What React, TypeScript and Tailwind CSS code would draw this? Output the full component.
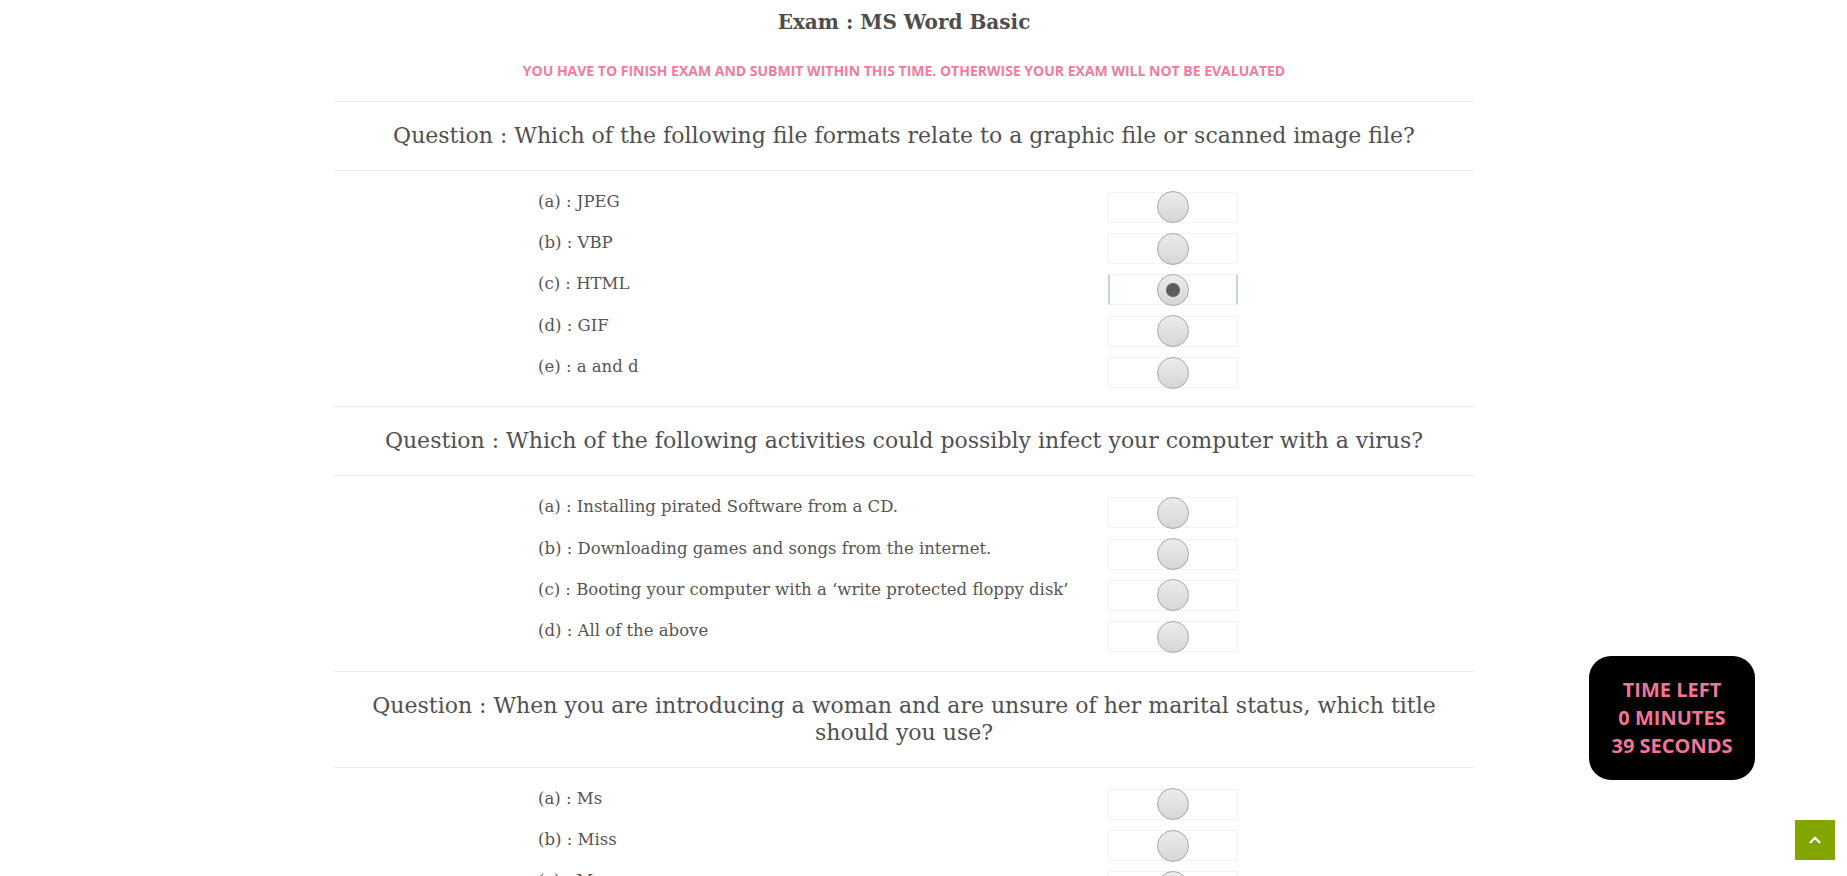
import { ChevronUp } from "lucide-react";

type Question = {
  text: string;
  options: string[];
  selected?: number;
};

const questions: Question[] = [
  {
    text: "Question : Which of the following file formats relate to a graphic file or scanned image file?",
    options: ["(a) : JPEG", "(b) : VBP", "(c) : HTML", "(d) : GIF", "(e) : a and d"],
    selected: 2,
  },
  {
    text: "Question : Which of the following activities could possibly infect your computer with a virus?",
    options: [
      "(a) : Installing pirated Software from a CD.",
      "(b) : Downloading games and songs from the internet.",
      "(c) : Booting your computer with a \u2018write protected floppy disk\u2019",
      "(d) : All of the above",
    ],
  },
  {
    text: "Question : When you are introducing a woman and are unsure of her marital status, which title should you use?",
    options: ["(a) : Ms", "(b) : Miss", "(c) : Mrs", "(d) : Madam"],
  },
];

const slab = "font-['DejaVu_Serif',serif]";

const Radio = ({ checked }: { checked?: boolean }) => (
  <div
    className={
      "w-[130px] h-[31px] flex items-center justify-center border " +
      (checked ? "border-[#f3f3f3] border-x-2 border-x-[#c5d3ec]" : "border-[#f3f3f3]")
    }
  >
    <div className="w-[32px] h-[32px] rounded-full border border-[#a9a9a9] bg-gradient-to-b from-[#ececec] to-[#d6d6d6] flex items-center justify-center">
      {checked && <div className="w-[14px] h-[14px] rounded-full bg-[#5c5c5c]" />}
    </div>
  </div>
);

const QuestionBlock = ({ q }: { q: Question }) => (
  <div>
    <div className="border-t border-[#ececec] py-[20px] px-[30px]">
      <h3 className={`${slab} text-center text-[22px] leading-[27.5px] text-[#505050]`}>{q.text}</h3>
    </div>
    <div className="border-t border-[#ececec] pt-[16px] pb-[13px]">
      {q.options.map((o, i) => (
        <div key={i} className="h-[41.4px] flex items-center pl-[204px]">
          <div className={`${slab} w-[570px] mb-[11px] text-[16.5px] leading-[22px] text-[#555]`}>{o}</div>
          <Radio checked={q.selected === i} />
        </div>
      ))}
    </div>
  </div>
);

export default function App() {
  return (
    <div className="h-screen overflow-hidden bg-white relative">
      <div className="ml-[334px] w-[1140px] pt-[7px]">
        <h1 className={`${slab} font-bold text-center text-[20px] leading-[30px] text-[#4d4d4d]`}>
          Exam : MS Word Basic
        </h1>
        <p className="mt-[24px] mb-[20px] text-center font-['Open_Sans',sans-serif] font-bold text-[14px] leading-[20px] text-[#f47a9b]">
          YOU HAVE TO FINISH EXAM AND SUBMIT WITHIN THIS TIME. OTHERWISE YOUR EXAM WILL NOT BE EVALUATED
        </p>
        {questions.map((q, i) => (
          <QuestionBlock key={i} q={q} />
        ))}
      </div>

      <div className="fixed left-[1589px] top-[656px] w-[166px] h-[124px] rounded-[22px] bg-black flex flex-col items-center justify-center font-['Open_Sans',sans-serif] font-bold text-[20px] leading-[28px] text-[#f47497]">
        <div>TIME LEFT</div>
        <div>0 MINUTES</div>
        <div>39 SECONDS</div>
      </div>

      <button className="fixed left-[1795px] top-[820px] w-[40px] h-[40px] bg-[#83a500] flex items-center justify-center text-white">
        <ChevronUp size={18} strokeWidth={3} />
      </button>
    </div>
  );
}
